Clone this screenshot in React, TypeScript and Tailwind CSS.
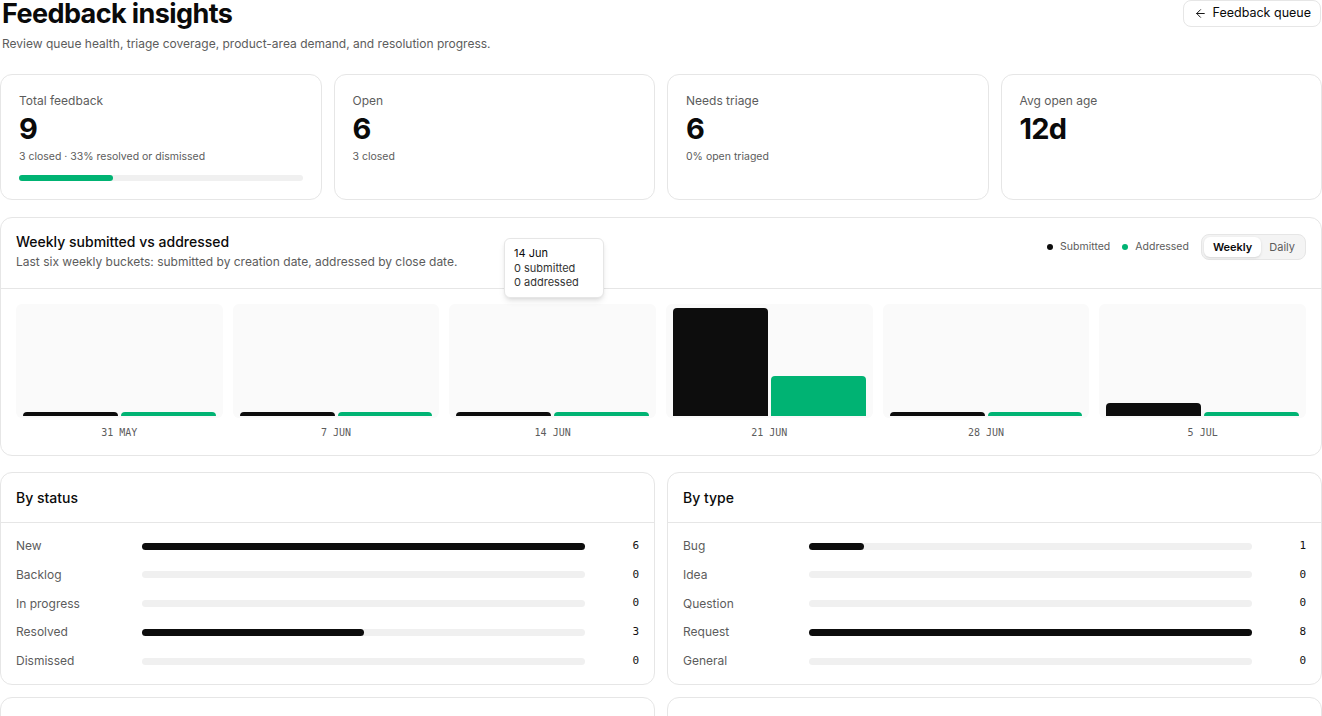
import React from 'react';
import { ArrowLeft } from 'lucide-react';

type Stat = { label: string; value: string; sub?: string; progress?: number };

const stats: Stat[] = [
  { label: 'Total feedback', value: '9', sub: '3 closed · 33% resolved or dismissed', progress: 33 },
  { label: 'Open', value: '6', sub: '3 closed' },
  { label: 'Needs triage', value: '6', sub: '0% open triaged' },
  { label: 'Avg open age', value: '12d' },
];

const weeks = [
  { label: '31 MAY', submitted: 0, addressed: 0 },
  { label: '7 JUN', submitted: 0, addressed: 0 },
  { label: '14 JUN', submitted: 0, addressed: 0 },
  { label: '21 JUN', submitted: 8, addressed: 3 },
  { label: '28 JUN', submitted: 0, addressed: 0 },
  { label: '5 JUL', submitted: 1, addressed: 0 },
];

const byStatus = [
  { label: 'New', value: 6 },
  { label: 'Backlog', value: 0 },
  { label: 'In progress', value: 0 },
  { label: 'Resolved', value: 3 },
  { label: 'Dismissed', value: 0 },
];

const byType = [
  { label: 'Bug', value: 1 },
  { label: 'Idea', value: 0 },
  { label: 'Question', value: 0 },
  { label: 'Request', value: 8 },
  { label: 'General', value: 0 },
];

const mono = "font-['DejaVu_Sans_Mono',monospace]";

const StatCard: React.FC<{ stat: Stat }> = ({ stat }) => (
  <div className="rounded-xl border border-[#e6e6e6] bg-white px-[18px] pt-[17px] pb-[18px]">
    <div className="text-[12px] leading-[18px] text-[#5c5c5c]">{stat.label}</div>
    <div className="mt-[2px] text-[29px] leading-[34px] font-bold tracking-tight text-[#0a0a0a]">{stat.value}</div>
    {stat.sub && <div className="mt-[3px] text-[10.5px] leading-4 text-[#5c5c5c]">{stat.sub}</div>}
    {stat.progress !== undefined && (
      <div className="mt-[10px] h-1.5 w-full rounded-full bg-[#f0f0f0]">
        <div className="h-1.5 rounded-full bg-[#00b373]" style={{ width: `${stat.progress}%` }} />
      </div>
    )}
  </div>
);

const Bar: React.FC<{ value: number; max: number; color: string }> = ({ value, max, color }) => {
  const h = value === 0 ? 4 : Math.max(4, (value / max) * 108);
  return <div className={`flex-1 rounded-t-[4px] ${color}`} style={{ height: h }} />;
};

const BreakdownCard: React.FC<{ title: string; rows: { label: string; value: number }[] }> = ({ title, rows }) => {
  const max = Math.max(...rows.map((r) => r.value));
  return (
    <div className="rounded-xl border border-[#e6e6e6] bg-white">
      <div className="border-b border-[#e6e6e6] px-[15px] pt-[15px] pb-[14px] text-[14px] leading-5 font-medium text-[#0a0a0a]">{title}</div>
      <div className="flex flex-col gap-[8.75px] px-[15px] pt-[13px] pb-[13px]">
        {rows.map((r) => (
          <div key={r.label} className="grid h-5 grid-cols-[112px_1fr_40px] items-center gap-x-[14px]">
            <span className="text-[12px] text-[#5c5c5c]">{r.label}</span>
            <div className="h-[7px] rounded-full bg-[#f0f0f0]">
              {r.value > 0 && (
                <div className="h-[7px] rounded-full bg-[#0d0d0d]" style={{ width: `${(r.value / max) * 100}%` }} />
              )}
            </div>
            <span className={`text-right text-[11px] text-[#111] ${mono}`}>{r.value}</span>
          </div>
        ))}
      </div>
    </div>
  );
};

export default function App() {
  return (
    <div className="min-h-screen w-full bg-white font-['Inter',sans-serif] text-[#0a0a0a]">
      <div className="flex items-start justify-between">
        <div className="pl-[2px]">
          <h1 className="text-[27px] leading-none font-bold tracking-[-0.022em]">Feedback insights</h1>
          <p className="mt-[8px] text-[12px] leading-[18px] text-[#5c5c5c]">
            Review queue health, triage coverage, product-area demand, and resolution progress.
          </p>
        </div>
        <button className="mr-px flex h-[27px] items-center gap-[6px] rounded-lg border border-[#e6e6e6] bg-white pr-[9px] pl-[10px] text-[12.5px] text-[#0a0a0a]">
          <ArrowLeft size={13} strokeWidth={1.75} />
          Feedback queue
        </button>
      </div>

      <div className="mt-[21px] grid grid-cols-4 gap-3">
        {stats.map((s) => (
          <StatCard key={s.label} stat={s} />
        ))}
      </div>

      <div className="relative mt-[17px] rounded-xl border border-[#e6e6e6] bg-white">
        <div className="flex items-start justify-between border-b border-[#e6e6e6] px-[15px] pt-[14px] pb-[17px]">
          <div>
            <div className="text-[14px] leading-5 font-medium">Weekly submitted vs addressed</div>
            <div className="mt-[1px] text-[12px] leading-[18px] text-[#5c5c5c]">
              Last six weekly buckets: submitted by creation date, addressed by close date.
            </div>
          </div>
          <div className="flex items-center gap-3 pt-[2px]">
            <div className="flex items-center gap-[7px] text-[10.5px] text-[#5c5c5c]">
              <span className="h-[6px] w-[6px] rounded-full bg-[#0d0d0d]" />
              Submitted
            </div>
            <div className="flex items-center gap-[7px] text-[10.5px] text-[#5c5c5c]">
              <span className="h-[6px] w-[6px] rounded-full bg-[#00b373]" />
              Addressed
            </div>
            <div className="flex h-[26px] items-center rounded-lg border border-[#e6e6e6] bg-[#f4f4f4] p-[2px] text-[11px]">
              <span className="flex h-full items-center rounded-md bg-white px-[9px] font-semibold text-[#0a0a0a] shadow-sm">Weekly</span>
              <span className="px-[8px] text-[#5c5c5c]">Daily</span>
            </div>
          </div>
        </div>

        <div className="grid grid-cols-6 gap-[10px] px-[15px] pt-[15px] pb-[16px]">
          {weeks.map((w) => (
            <div key={w.label} className="flex flex-col items-center">
              <div className="flex h-[114px] w-full items-end gap-[3px] rounded-md bg-[#fafafa] px-[7px] pb-[2px]">
                <Bar value={w.submitted} max={8} color="bg-[#0d0d0d]" />
                <Bar value={w.addressed} max={8} color="bg-[#00b373]" />
              </div>
              <div className={`mt-[9px] text-[10px] leading-3 text-[#5c5c5c] ${mono}`}>{w.label}</div>
            </div>
          ))}
        </div>

        <div className="absolute top-[20px] left-[503px] w-[100px] rounded-md border border-[#e6e6e6] bg-white px-[9px] py-[7px] text-[11px] leading-[14.5px] shadow-md">
          <div className="text-[#0a0a0a]">14 Jun</div>
          <div className="text-[#333]">0 submitted</div>
          <div className="text-[#333]">0 addressed</div>
        </div>
      </div>

      <div className="mt-[16px] grid grid-cols-2 gap-3">
        <BreakdownCard title="By status" rows={byStatus} />
        <BreakdownCard title="By type" rows={byType} />
        <BreakdownCard
          title="By product area"
          rows={[
            { label: 'Dashboard', value: 4 },
            { label: 'Billing', value: 2 },
            { label: 'Integrations', value: 3 },
          ]}
        />
        <BreakdownCard
          title="By priority"
          rows={[
            { label: 'High', value: 2 },
            { label: 'Medium', value: 5 },
            { label: 'Low', value: 2 },
          ]}
        />
      </div>
    </div>
  );
}
